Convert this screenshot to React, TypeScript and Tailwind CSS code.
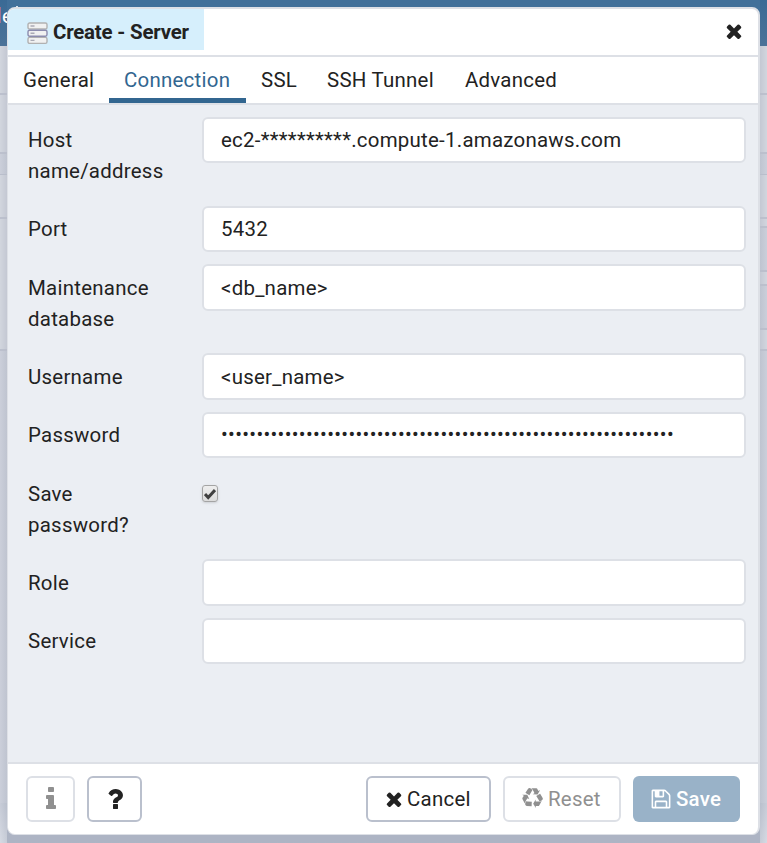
import type { ReactNode } from "react";

const tabs = [
  { name: "General", box: "w-[101px] pl-[15px]" },
  { name: "Connection", box: "w-[137px] pl-[15px] text-[#326690] border-b-[5px] border-[#326690]" },
  { name: "SSL", box: "w-[66px] pl-[15px]" },
  { name: "SSH Tunnel", box: "w-[138px] pl-[15px]" },
  { name: "Advanced", box: "w-[130px] pl-[15px]" },
];

const glyphs = {
  times:
    "M1490 1322q0 40-28 68l-136 136q-28 28-68 28t-68-28l-294-294-294 294q-28 28-68 28t-68-28l-136-136q-28-28-28-68t28-68l294-294-294-294q-28-28-28-68t28-68l136-136q28-28 68-28t68 28l294 294 294-294q28-28 68-28t68 28l136 136q28 28 28 68t-28 68l-294 294 294 294q28 28 28 68z",
  info:
    "M1216 1344v128q0 26-19 45t-45 19h-512q-26 0-45-19t-19-45v-128q0-26 19-45t45-19h64v-384h-64q-26 0-45-19t-19-45v-128q0-26 19-45t45-19h384q26 0 45 19t19 45v576h64q26 0 45 19t19 45zm-128-1152v192q0 26-19 45t-45 19h-256q-26 0-45-19t-19-45v-192q0-26 19-45t45-19h256q26 0 45 19t19 45z",
  question:
    "M1088 1256v240q0 16-12 28t-28 12h-240q-16 0-28-12t-12-28v-240q0-16 12-28t28-12h240q16 0 28 12t12 28zm316-600q0 54-15.5 101t-35 76.5-55 59.5-57.5 43.5-61 35.5q-41 23-68.5 65t-27.5 67q0 17-12 32.5t-28 15.5h-240q-15 0-25.5-18.5t-10.5-37.5v-45q0-83 65-156.5t143-108.5q59-27 84-56t25-76q0-42-46.5-74t-107.5-32q-65 0-108 29-35 25-107 115-13 16-31 16-12 0-25-8l-164-125q-13-10-15.5-25t5.5-28q160-266 464-266 80 0 161 31t146 83 106 127.5 41 158.5z",
  recycle:
    "M836 1169l-15 368-2 22-420-29q-36-3-67-31.5t-47-65.5q-11-27-14.5-55t4-65 12-55 21.5-64 19-53q78 12 509 28zm-387-586l180 379-147-92q-63 72-111.5 144.5t-72.5 125-39.5 94.5-18.5 63l-4 21-190-357q-17-26-18-56t6-47l8-18q35-63 114-188l-140-86zm1231 517l-188 359q-12 29-36.5 46.5t-43.5 20.5l-18 4q-71 7-219 12l8 164-230-367 211-362 7 173q170 16 283 5t170-33zm-785-924q-47 63-265 435l-317-187-19-12 225-356q20-31 60-45t80-10q24 2 48.5 12t42 21 41.5 33 36 34.5 36 39.5 32 35zm655 307l212 363q18 37 12.5 76t-27.5 74q-13 20-33 37t-38 28-48.5 22-47 16-51.5 14-46 12q-34-72-265-436l313-195zm-143-226l142-83-220 373-419-20 151-86q-34-89-75-166t-75.5-123.5-64.5-80-47-46.5l-17-13 405 1q31-3 58 10.5t39 28.5l11 15q39 61 112 190z",
  floppy:
    "M512 1536h768v-384h-768v384zm896 0h128v-896q0-14-10-38.5t-20-34.5l-281-281q-10-10-34-20t-39-10v416q0 40-28 68t-68 28h-576q-40 0-68-28t-28-68v-416h-128v1280h128v-416q0-40 28-68t68-28h832q40 0 68 28t28 68v416zm-384-928v-320q0-13-9.5-22.5t-22.5-9.5h-192q-13 0-22.5 9.5t-9.5 22.5v320q0 13 9.5 22.5t22.5 9.5h192q13 0 22.5-9.5t9.5-22.5zm640 32v928q0 40-28 68t-68 28h-1344q-40 0-68-28t-28-68v-1344q0-40 28-68t68-28h928q40 0 88 20t76 48l280 280q28 28 48 76t20 88z",
};

function Icon({ name, className }: { name: keyof typeof glyphs; className: string }) {
  return (
    <svg className={"shrink-0 " + className} viewBox="0 0 1792 1792" fill="currentColor">
      <path d={glyphs[name]} />
    </svg>
  );
}

function ServerIcon() {
  return (
    <svg className="mt-[7px] h-[23px] w-[21px]" viewBox="0 0 21 23" fill="#f1f1f1" strokeWidth="1.4">
      <rect x="1" y="1" width="19" height="6" rx="1.6" stroke="#b1b1b1" />
      <rect x="1" y="15.4" width="19" height="6" rx="1.6" stroke="#b1b1b1" />
      <rect x="1" y="8.2" width="19" height="6" rx="1.6" stroke="#8c8cae" />
      <path d="M3.5 4h4M3.5 11.2h4M3.5 18.4h4" stroke="#aaaab5" />
    </svg>
  );
}

function Row({ label, height, low = false, children }: { label: string; height: string; low?: boolean; children: ReactNode }) {
  return (
    <div className={"flex " + height}>
      <div className={"w-[174px] shrink-0 pr-[30px] " + (low ? "pt-[9px]" : "pt-[8px]")}>{label}</div>
      {children}
    </div>
  );
}

function Field({ value = "", tall = false, dots = false }: { value?: string; tall?: boolean; dots?: boolean }) {
  return (
    <div
      className={
        "flex w-[544px] items-center rounded-md border-2 border-[#dde0e6] bg-white pl-[17px] whitespace-nowrap " +
        (tall ? "h-[47px] pt-px" : "h-[46px]")
      }
    >
      <span className={dots ? "-mt-px text-[20px] tracking-[0.33px]" : ""}>{value}</span>
    </div>
  );
}

function Edge({ side }: { side: "left" | "right" }) {
  const left = side === "left";
  const line = "border-b-2 border-[#b9becb]/90";
  const tone = "from-[#d2d6de] to-[#c4c8d3] " + (left ? "bg-gradient-to-r" : "bg-gradient-to-l");
  const deep = "from-[#cbcfda] to-[#bfc4d0] " + (left ? "bg-gradient-to-r" : "bg-gradient-to-l");
  return (
    <div className="flex w-[7px] shrink-0 flex-col overflow-hidden">
      <div className="flex h-[46px] shrink-0 bg-gradient-to-b from-[#3a6a95] to-[#4b7298] text-white">
        {left && (
          <>
            <span className="mt-[7px] h-[16px] w-px shrink-0 bg-[#a2708f]" />
            <span className="ml-px text-[20px] leading-[32px]">e</span>
          </>
        )}
      </div>
      <div className={"h-[49px] shrink-0 " + tone + " " + line} />
      <div className={"h-[59px] shrink-0 " + tone + " " + line} />
      <div className={"h-[21px] shrink-0 border-b border-[#b9becb] " + deep} />
      <div className={"h-[44px] shrink-0 " + tone + " " + line} />
      {left ? (
        <div className={"h-[132px] shrink-0 " + tone + " " + line} />
      ) : (
        <>
          <div className={"h-[9px] shrink-0 " + tone + " " + line} />
          <div className={"h-[44px] shrink-0 " + deep + " " + line} />
          <div className={"h-[14px] shrink-0 " + tone + " " + line} />
          <div className={"h-[44px] shrink-0 " + deep + " " + line} />
          <div className={"h-[21px] shrink-0 " + tone + " " + line} />
        </>
      )}
      <div className={"grow " + deep} />
      <div className={"h-[40px] shrink-0 from-[#d6dae3] to-[#b9bfcc] " + (left ? "bg-gradient-to-tr" : "bg-gradient-to-tl")} />
    </div>
  );
}

export default function App() {
  return (
    <div className="flex h-[843px] w-[767px] overflow-hidden bg-[#b1b8c7] font-[Roboto,sans-serif] text-[20.45px] leading-[31px] tracking-[0.25px] text-[#222222]">
      <Edge side="left" />
      <div className="flex w-[753px] shrink-0 flex-col bg-gradient-to-b from-[#41709a] from-50% to-[#adb4c4] to-50%">
        <div className="flex h-[7px] shrink-0 items-end pl-[9px]">
          <span className="h-px w-[2px] bg-[#d5e0ea]" />
        </div>
        <div className="flex h-[828px] shrink-0 flex-col overflow-hidden rounded-lg border border-t-2 border-r-2 border-[#dde0e6] bg-white">
          <header className="flex h-[48px] shrink-0 items-start justify-between border-b-2 border-[#dde0e6]">
            <div className="flex h-[41px] w-[196px] items-center bg-[#d6effc] pl-[19px]">
              <ServerIcon />
              <span className="ml-[5px] pt-[5px] font-bold tracking-[-0.2px] whitespace-nowrap">Create - Server</span>
            </div>
            <Icon name="times" className="mt-[11px] mr-[13px] h-[22px] w-[22px]" />
          </header>
          <nav className="flex h-[48px] shrink-0 border-b-2 border-[#dde0e6]">
            {tabs.map((t) => (
              <div key={t.name} className={"pt-[8px] whitespace-nowrap " + t.box}>{t.name}</div>
            ))}
          </nav>
          <main className="flex h-[657px] shrink-0 flex-col bg-[#ebeef3] pt-[12px] pl-[20px]">
            <Row label="Host name/address" height="h-[89px]"><Field value="ec2-**********.compute-1.amazonaws.com" /></Row>
            <Row label="Port" height="h-[58px]"><Field value="5432" /></Row>
            <Row label="Maintenance database" height="h-[89px]" low><Field value="<db_name>" tall /></Row>
            <Row label="Username" height="h-[59px]" low><Field value="<user_name>" tall /></Row>
            <Row label="Password" height="h-[59px]"><Field value={"•".repeat(64)} dots /></Row>
            <Row label="Save password?" height="h-[88px]">
              <div className="mt-[14px] flex h-[17px] w-[16px] items-center justify-center rounded-[3px] border border-[#a4a4a4] bg-gradient-to-b from-[#eeeeee] to-[#dcdcdc] shadow-sm">
                <svg className="h-[12px] w-[12px]" viewBox="0 0 12 12" fill="none" stroke="#404040" strokeWidth="3"><path d="M1 6l3.2 3.5L11 2" /></svg>
              </div>
            </Row>
            <Row label="Role" height="h-[59px]" low><Field tall /></Row>
            <Row label="Service" height="h-[46px]"><Field /></Row>
          </main>
          <footer className="flex h-[72px] shrink-0 items-start border-t-2 border-[#dde0e6] pt-[12px] pl-[18px]">
            <button className="flex h-[46px] w-[49px] items-center justify-center rounded-md border-2 border-[#dde0e6] text-[#909090]">
              <Icon name="info" className="h-[28px] w-[28px]" />
            </button>
            <button className="ml-[12px] flex h-[46px] w-[55px] items-center justify-center rounded-md border-2 border-[#bac0cd]">
              <Icon name="question" className="h-[28px] w-[28px]" />
            </button>
            <button className="ml-[224px] flex h-[46px] w-[125px] items-center rounded-md border-2 border-[#bac0cd] pl-[15px]">
              <Icon name="times" className="mr-[2px] h-[22px] w-[22px]" />Cancel
            </button>
            <button className="ml-[12px] flex h-[46px] w-[118px] items-center rounded-md border-2 border-[#dde0e6] pl-[17px] text-[#909090]">
              <Icon name="recycle" className="mr-[5px] mb-[2px] h-[21px] w-[21px]" />Reset
            </button>
            <button className="ml-[12px] flex h-[46px] w-[107px] items-center rounded-md bg-[#99b2c8] pl-[17px] font-medium text-white">
              <Icon name="floppy" className="mr-[4px] h-[22px] w-[22px]" />Save
            </button>
          </footer>
        </div>
      </div>
      <Edge side="right" />
    </div>
  );
}
